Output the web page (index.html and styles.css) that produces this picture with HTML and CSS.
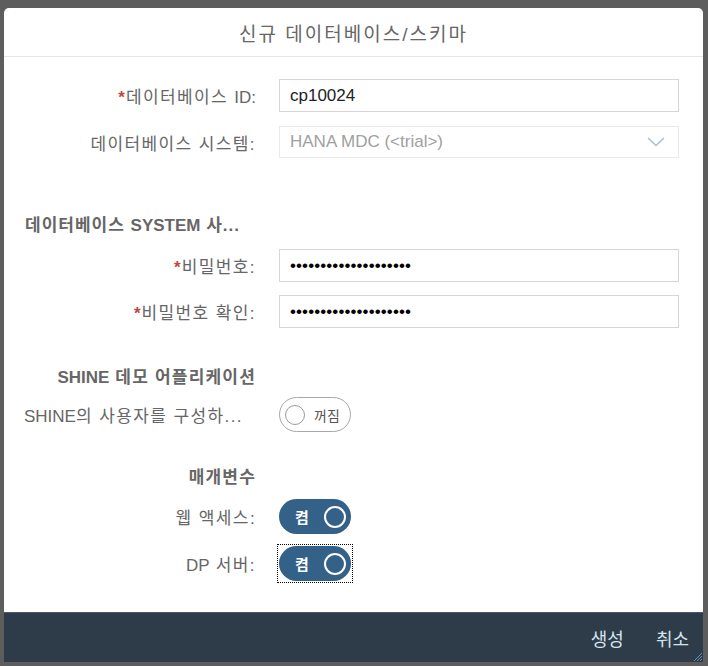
FILE: index.html
```html
<!DOCTYPE html>
<html lang="ko">
<head>
<meta charset="utf-8">
<link rel="stylesheet" href="styles.css">
</head>
<body>
<div class="dialog">
  <header class="dlg-head">신규 데이터베이스/스키마</header>
  <div class="dlg-body">
    <div class="row r1">
      <label class="lbl"><span class="req">*</span>데이터베이스 <span class="lat">ID:</span></label>
      <div class="field"><div class="input">cp10024</div></div>
    </div>
    <div class="row r2">
      <label class="lbl">데이터베이스 시스템:</label>
      <div class="field"><div class="input select"><span>HANA MDC (&lt;trial&gt;)</span>
        <svg class="chev" width="18" height="10" viewBox="0 0 18 10"><path d="M1 1 L9 8.5 L17 1" fill="none" stroke="#a9bccc" stroke-width="1.3"/></svg></div></div>
    </div>
    <div class="sec s1">데이터베이스 <span class="lat">SYSTEM</span> 사...</div>
    <div class="row r3">
      <label class="lbl"><span class="req">*</span>비밀번호:</label>
      <div class="field"><div class="input pw">••••••••••••••••••••</div></div>
    </div>
    <div class="row r4">
      <label class="lbl"><span class="req">*</span>비밀번호 확인:</label>
      <div class="field"><div class="input pw">••••••••••••••••••••</div></div>
    </div>
    <div class="row sec-row s2"><div class="lbl bold"><span class="lat">SHINE</span> 데모 어플리케이션</div></div>
    <div class="row trow t1">
      <label class="lbl left"><span class="lat">SHINE</span>의 사용자를 구성하...</label>
      <div class="field"><div class="toggle off"><span class="knob"></span><span class="ttext">꺼짐</span></div></div>
    </div>
    <div class="row sec-row s3"><div class="lbl bold">매개변수</div></div>
    <div class="row trow t2">
      <label class="lbl">웹 액세스:</label>
      <div class="field"><div class="toggle on"><span class="ttext">켬</span><span class="knob"></span></div></div>
    </div>
    <div class="row trow t3">
      <label class="lbl"><span class="lat">DP</span> 서버:</label>
      <div class="field"><div class="focus"><div class="toggle on"><span class="ttext">켬</span><span class="knob"></span></div></div></div>
    </div>
  </div>
  <footer class="dlg-foot">
    <button class="btn">생성</button>
    <button class="btn">취소</button>
    <svg class="grip" width="10" height="10" viewBox="0 0 10 10"><path d="M2 10 L10 2 M5 10 L10 5 M8 10 L10 8" stroke="#5a8fc0" stroke-width="1"/></svg>
  </footer>
</div>
</body>
</html>
```
FILE: styles.css
```css
html, body {
  margin: 0;
  padding: 0;
}
body {
  background: #5d5d5d;
  width: 708px;
  height: 666px;
  padding: 8px 5px 4px 4px;
  box-sizing: border-box;
  font-family: "Liberation Sans", "Noto Sans CJK KR", sans-serif;
}
.dialog {
  width: 699px;
  height: 654px;
  background: #fff;
  border-radius: 5px 5px 0 0;
  display: flex;
  flex-direction: column;
  overflow: hidden;
  position: relative;
}
.dlg-head {
  border-bottom: 1px solid #e5e5e5;
  display: flex;
  align-items: center;
  justify-content: center;
  font-size: 19px;
  letter-spacing: 2px;
  color: #666;
  padding-top: 1px;
  box-sizing: border-box;
  height: 49px;
}
.dlg-body {
  flex: 1;
  display: flex;
  flex-direction: column;
  padding: 0 24px 0 20px;
}
.row {
  display: grid;
  grid-template-columns: 232px 400px;
  column-gap: 23px;
  align-items: center;
}
.lbl {
  text-align: right;
  font-size: 17px;
  letter-spacing: 1.4px;
  color: #666;
  white-space: nowrap;
}
.lbl.left { text-align: left; padding-left: 0; }
.lbl.bold { font-weight: bold; letter-spacing: 1.2px; }
.lat { letter-spacing: 0; }
.req {
  color: #c14646;
  font-weight: bold;
  font-size: 17px;
  letter-spacing: 0;
  margin-right: 1px;
}
.input {
  height: 33px;
  border: 1px solid #d6d6d6;
  box-sizing: border-box;
  display: flex;
  align-items: center;
  padding: 0 10px;
  font-size: 17px;
  color: #222;
}
.input.select {
  border-color: #ebebeb;
  color: #a0a0a0;
  justify-content: space-between;
  height: 32px;
}
.chev { margin-right: 3px; }
.input.pw {
  font-size: 17px;
  letter-spacing: 0.1px;
  color: #000;
}
.r1 { margin-top: 22px; }
.r2 { margin-top: 14px; }
.sec {
  margin-top: 56px;
  height: 24px;
  line-height: 24px;
  font-size: 17px;
  letter-spacing: 1px;
  font-weight: bold;
  color: #666;
  padding-left: 1px;
  white-space: nowrap;
}
.r3 { margin-top: 11px; }
.r4 { margin-top: 13px; }
.s2 { margin-top: 35px; height: 24px; }
.t1 { margin-top: 10px; }
.s3 { margin-top: 31px; height: 24px; }
.t2 { margin-top: 12px; }
.t3 { margin-top: 11px; }
.toggle {
  width: 72px;
  height: 35px;
  border-radius: 18px;
  box-sizing: border-box;
  display: flex;
  align-items: center;
  font-family: "Noto Sans CJK KR", sans-serif;
}
.toggle.off {
  border: 1px solid #a8a8a8;
  padding-left: 5px;
  gap: 9px;
  color: #555;
  font-size: 14px;
}
.toggle.off .knob {
  width: 18px;
  height: 18px;
  border: 1.5px solid #9a9a9a;
  border-radius: 50%;
}
.toggle.on {
  background: #346187;
  padding: 0 5px 0 16px;
  justify-content: space-between;
  color: #fff;
  font-size: 15px;
  font-weight: bold;
}
.toggle.on .knob {
  width: 18px;
  height: 18px;
  border: 2px solid #fff;
  border-radius: 50%;
}
.focus {
  outline: 1px dotted #000;
  outline-offset: 0;
  margin-left: -1px;
  padding: 1px;
  box-sizing: border-box;
  width: 74px;
}
.dlg-foot {
  height: 50px;
  background: #2e3b48;
  border-top: 1px solid #49586a;
  box-sizing: border-box;
  display: flex;
  align-items: center;
  justify-content: flex-end;
  padding-right: 14px;
  gap: 32px;
  position: relative;
}
.btn {
  background: none;
  border: none;
  padding: 0;
  color: #d3e3f1;
  font-size: 18px;
  font-family: "Noto Sans CJK KR", sans-serif;
  cursor: pointer;
}
.grip {
  position: absolute;
  right: 1px;
  bottom: 1px;
}
```
